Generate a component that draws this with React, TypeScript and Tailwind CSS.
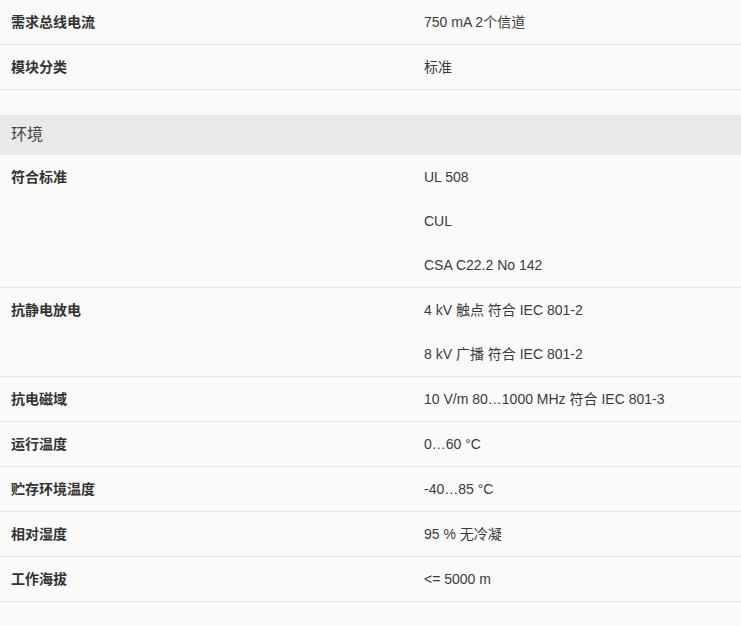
const rowsTop = [
  { label: "需求总线电流", values: ["750 mA 2个信道"] },
  { label: "模块分类", values: ["标准"] },
];

const rowsEnv = [
  { label: "符合标准", values: ["UL 508", "CUL", "CSA C22.2 No 142"] },
  { label: "抗静电放电", values: ["4 kV 触点 符合 IEC 801-2", "8 kV 广播 符合 IEC 801-2"] },
  { label: "抗电磁域", values: ["10 V/m 80…1000 MHz 符合 IEC 801-3"] },
  { label: "运行温度", values: ["0…60 °C"] },
  { label: "贮存环境温度", values: ["-40…85 °C"] },
  { label: "相对湿度", values: ["95 % 无冷凝"] },
  { label: "工作海拔", values: ["<= 5000 m"] },
];

function Row({ label, values }: { label: string; values: string[] }) {
  return (
    <div className="flex border-b border-[#e6e6e6]">
      <div className="w-[413px] shrink-0 px-[11px] py-3 leading-5 font-bold text-[#333]">{label}</div>
      <div className="flex-1 px-[11px]">
        {values.map((v) => (
          <p key={v} className="py-3 leading-5 text-[#3a3a3a]">{v}</p>
        ))}
      </div>
    </div>
  );
}

export default function App() {
  return (
    <div
      className="min-h-[626px] bg-[#fafafa] text-sm"
      style={{ fontFamily: '"Liberation Sans", Arial, "Noto Sans CJK SC", sans-serif' }}
    >
      {rowsTop.map((r) => (
        <Row key={r.label} {...r} />
      ))}
      <div className="h-[25px]" />
      <h3 className="h-10 flex items-center px-[11px] bg-[#e9e9e9] text-base text-[#444]">环境</h3>
      {rowsEnv.map((r) => (
        <Row key={r.label} {...r} />
      ))}
    </div>
  );
}
